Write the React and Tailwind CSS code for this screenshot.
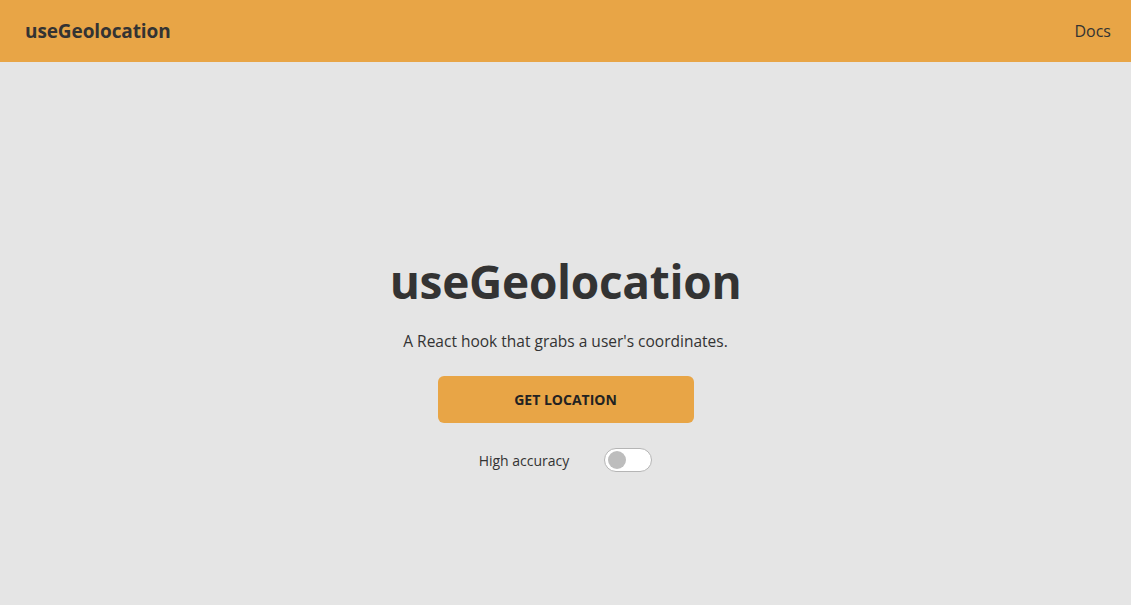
import { useState } from "react";

const font = { fontFamily: '"Open Sans", "Noto Sans", sans-serif' };

function Toggle({ on, onChange }) {
  return (
    <button
      onClick={() => onChange(!on)}
      className={`w-[48px] h-[24px] rounded-full border border-[#b5b5b5] flex items-center px-[3px] ${
        on ? "bg-[#e8a546] justify-end" : "bg-white justify-start"
      }`}
    >
      <span className="w-[18px] h-[18px] rounded-full bg-[#bdbdbd]" />
    </button>
  );
}

export default function App() {
  const [highAccuracy, setHighAccuracy] = useState(false);

  return (
    <div className="min-h-screen flex flex-col bg-[#e5e5e5] text-[#333333]" style={font}>
      {/* Header */}
      <header className="h-[62px] bg-[#e8a546] flex items-center justify-between pl-[25px] pr-[20px]">
        <div className="text-[19px] font-bold tracking-[-0.1px]">useGeolocation</div>
        <a className="text-[16px]">Docs</a>
      </header>

      {/* Hero */}
      <main className="flex-1 flex flex-col items-center pt-[191px]">
        <h1 className="text-[46px] leading-[56px] font-bold tracking-[-0.3px]">useGeolocation</h1>
        <p className="mt-[20px] text-[15.5px] leading-[24px]">A React hook that grabs a user's coordinates.</p>
        <button className="mt-[23px] w-[256px] h-[47px] rounded-[6px] bg-[#e8a546] text-[14px] font-bold uppercase text-[#222]">
          Get location
        </button>
        <div className="mt-[25px] flex items-center gap-[35px]">
          <span className="text-[14px]">High accuracy</span>
          <Toggle on={highAccuracy} onChange={setHighAccuracy} />
        </div>
      </main>
    </div>
  );
}
